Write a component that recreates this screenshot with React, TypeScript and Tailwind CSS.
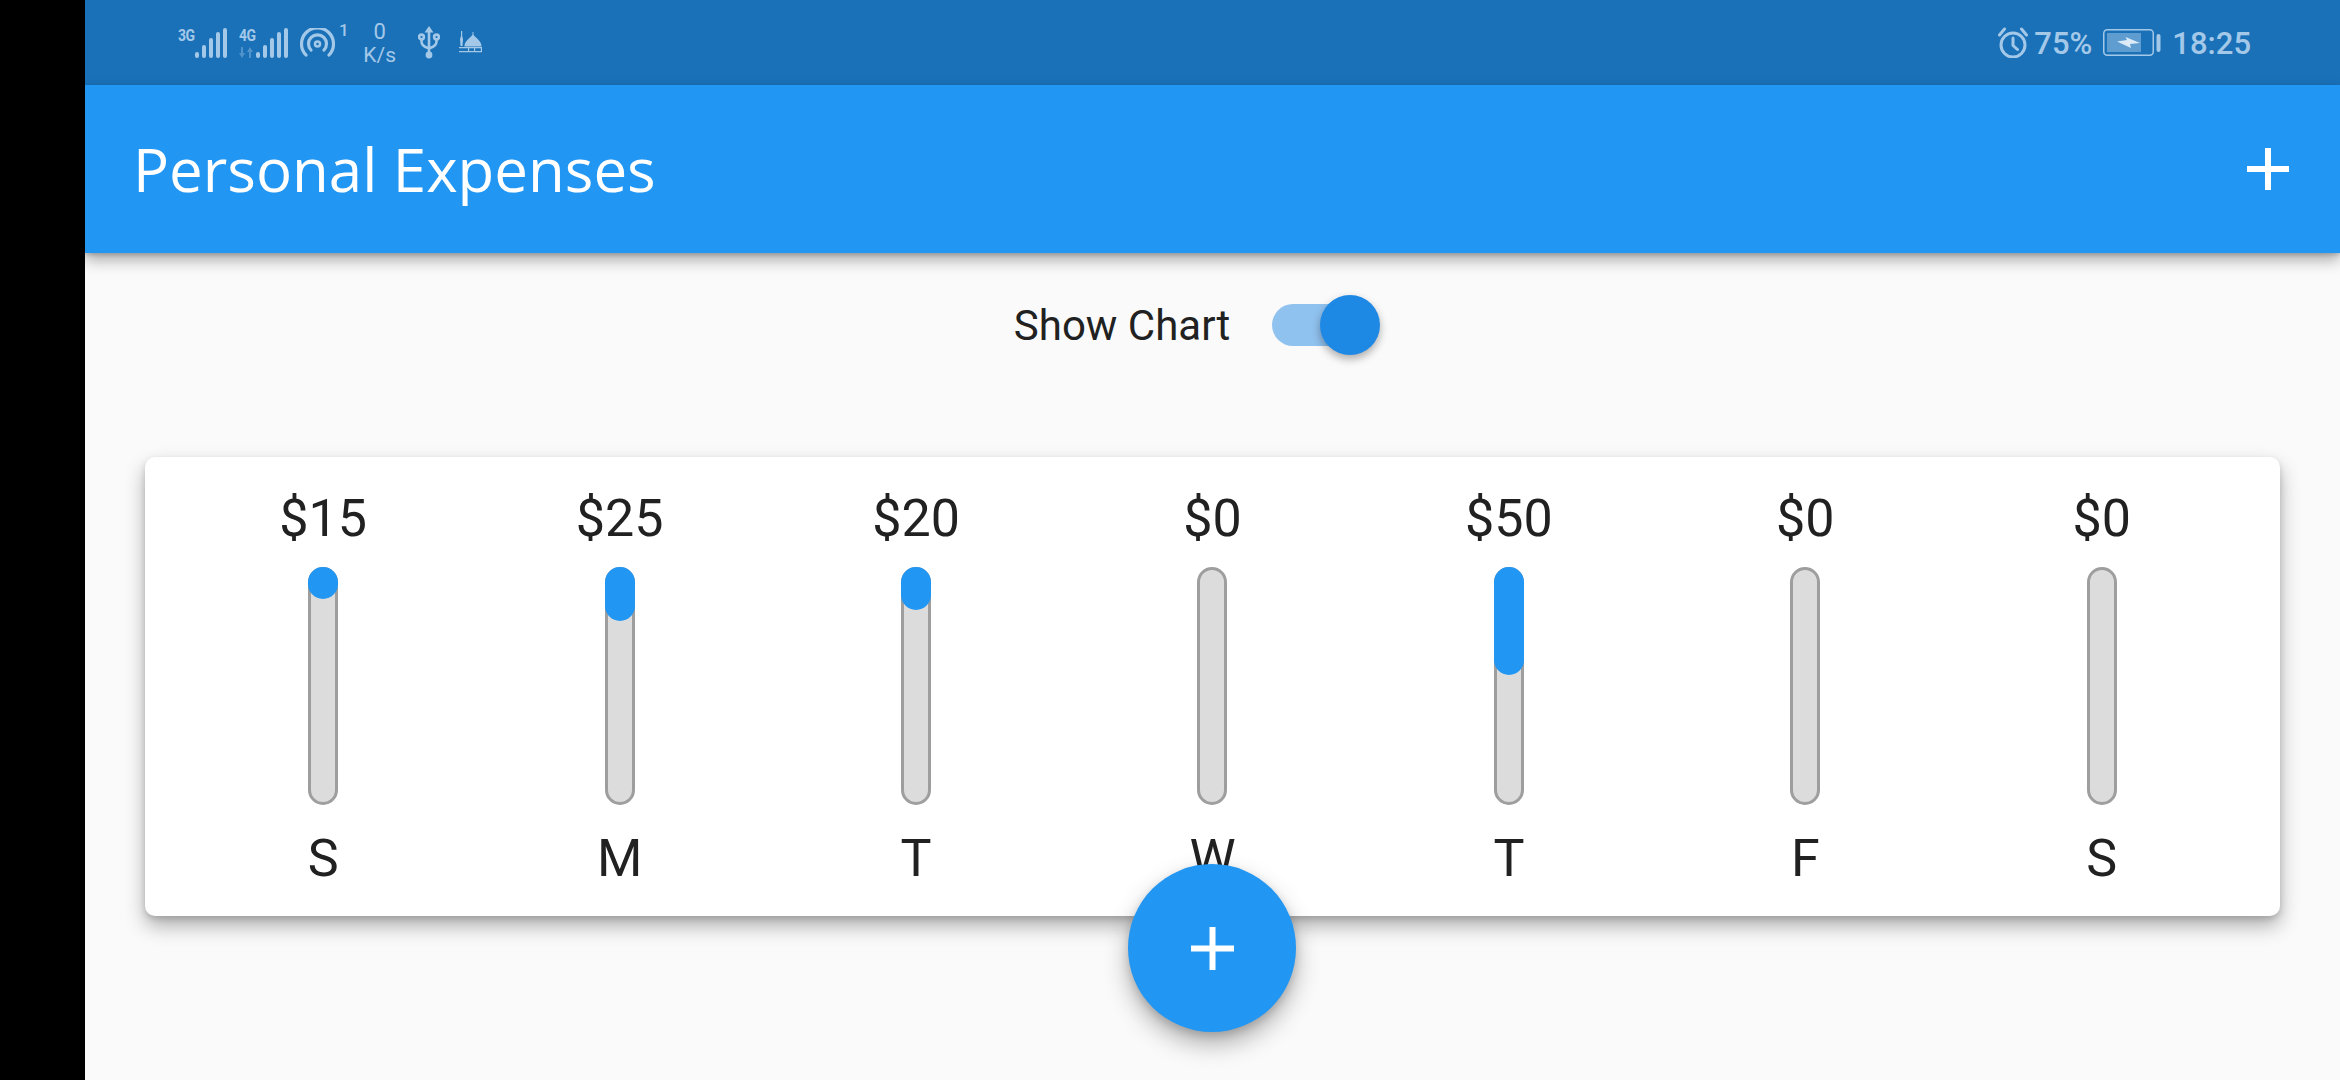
const BAR_HEIGHT = 238
const days = [
  { amount: '$15', label: 'S', pct: 15 / 110 },
  { amount: '$25', label: 'M', pct: 25 / 110 },
  { amount: '$20', label: 'T', pct: 20 / 110 },
  { amount: '$0', label: 'W', pct: 0 },
  { amount: '$50', label: 'T', pct: 50 / 110 },
  { amount: '$0', label: 'F', pct: 0 },
  { amount: '$0', label: 'S', pct: 0 },
]

const ICON = '#a4c8e8'

function ChartBar({ amount, label, pct }: { amount: string; label: string; pct: number }) {
  return (
    <div className="flex flex-1 flex-col items-center">
      <div className="h-[60px] text-[52px] leading-[60px] text-[#212121]">{amount}</div>
      <div className="relative mt-[18px] h-[238px] w-[30px] rounded-[15px] border-[3px] border-[#9e9e9e] bg-[#dcdcdc]">
        {pct > 0 && (
          <div
            className="absolute left-[-3px] top-[-3px] w-[30px] rounded-[15px] bg-[#2196f3]"
            style={{ height: BAR_HEIGHT * pct }}
          />
        )}
      </div>
      <div className="mt-[24px] h-[60px] text-[52px] leading-[60px] text-[#212121]">{label}</div>
    </div>
  )
}

function Signal({ label, arrows }: { label: string; arrows?: boolean }) {
  return (
    <div className="flex">
      <div className="flex h-[30px] w-[17px] flex-col">
        <span className="h-[16px] origin-left scale-x-[0.82] text-[17px] font-bold leading-[15px] tracking-[-0.5px] text-[#a4c8e8]">
          {label}
        </span>
        {arrows && (
          <svg width="15" height="11" viewBox="0 0 15 11" className="mt-[3px] opacity-40">
            <path d="M4 0v6H6L3 11 0 6h2V0zM10 11V5H8l3-5 3 5h-2v6z" fill={ICON} />
          </svg>
        )}
      </div>
      <svg width="32" height="30" viewBox="0 0 32 30">
        <g fill={ICON}>
          <rect x="0" y="24" width="4" height="6" rx="2" />
          <rect x="7" y="17" width="4" height="13" rx="2" />
          <rect x="14" y="10" width="4" height="20" rx="2" />
          <rect x="21" y="4" width="4" height="26" rx="2" />
          <rect x="28" y="0" width="4" height="30" rx="2" />
        </g>
      </svg>
    </div>
  )
}

function StatusBar() {
  return (
    <div className="flex h-[85px] items-center justify-between bg-[#1a71b8] pl-[93px] pr-[89px] text-[#a4c8e8]">
      <div className="flex items-center">
        <Signal label="3G" />
        <div className="ml-[12px]">
          <Signal label="4G" arrows />
        </div>
        {/* hotspot */}
        <svg width="35" height="30" viewBox="0 0 35 30" className="ml-[12px]" fill="none" stroke={ICON} strokeWidth="3.2" strokeLinecap="round">
          <path d="M6 27A16 16 0 1 1 29 27" />
          <path d="M11 22A9 9 0 1 1 24 22" />
          <circle cx="17.5" cy="16" r="2.5" strokeWidth="2.5" />
        </svg>
        <span className="mb-[26px] ml-[4px] text-[17px] font-medium leading-[16px]">1</span>
        <div className="ml-[13px] flex w-[36px] flex-col items-center">
          <span className="text-[22px] leading-[24px]">0</span>
          <span className="text-[21px] leading-[22px]">K/s</span>
        </div>
        {/* usb */}
        <svg width="22" height="33" viewBox="0 0 22 33" className="ml-[20px]" fill="none" stroke={ICON} strokeWidth="2.6">
          <path d="M11 4V28M3.5 13V15.5Q3.5 20 10 22M18.5 13V15.5Q18.5 20 12 22" />
          <path d="M11 0L6.5 6.5H15.5Z" fill={ICON} stroke="none" />
          <circle cx="3.5" cy="11" r="2.4" />
          <circle cx="18.5" cy="11" r="2.4" />
          <circle cx="11" cy="29" r="3.4" fill={ICON} stroke="none" />
        </svg>
        {/* mosque */}
        <svg width="24" height="23" viewBox="0 0 24 23" className="ml-[18px]" fill={ICON}>
          <path d="M6.5 15.5C6.5 10 11 8 15 3.5 19 8 23.5 10 23.5 15.5Z" />
          <path d="M14.5 1h1v4h-1zM3 0h1.2v5L5 8 4.5 15h-2L2 8l1-3z" />
          <path d="M1 16h23v1.2H1zM1 20h23v1.2H1zM10 17h1.2v3H10zM16 17h1.2v3H16zM22.8 17H24v3h-1.2z" />
        </svg>
      </div>
      <div className="flex items-center">
        {/* alarm */}
        <svg width="30" height="31" viewBox="0 0 30 31" fill="none" stroke={ICON} strokeWidth="3" strokeLinecap="round" strokeLinejoin="round">
          <circle cx="15" cy="18" r="12" />
          <path d="M15 11v7.5l4.5 4M1.5 8L6.5 2M28.5 8L23.5 2" />
        </svg>
        <span className="ml-[6px] mt-[2px] text-[31px] font-medium leading-[36px]">75%</span>
        <svg width="58" height="27" viewBox="0 0 58 27" className="ml-[11px]" fill="none">
          <rect x="0.75" y="0.75" width="49.5" height="25.5" rx="3.5" stroke={ICON} strokeWidth="1.5" />
          <rect x="4" y="4" width="34" height="19" fill={ICON} opacity="0.5" />
          <path d="M14 12.5L24 11 22.5 8 37 14 27 15 28 19Z" fill="#dcebf7" />
          <rect x="53.5" y="5" width="4" height="18" rx="2" fill={ICON} />
        </svg>
        <span className="ml-[11px] mt-[2px] text-[31px] font-medium leading-[36px]">18:25</span>
      </div>
    </div>
  )
}

export default function App() {
  return (
    <div className="flex h-[1080px] w-[2340px] overflow-hidden bg-black font-['Roboto',sans-serif]">
      <div className="w-[85px] shrink-0 bg-black" />
      <div className="relative flex min-w-0 flex-1 flex-col bg-[#fafafa]">
        <StatusBar />
        <header className="z-10 flex h-[168px] items-center justify-between bg-[#2196f3] pl-[48px] pr-[51px] shadow-[0_7px_14px_rgba(0,0,0,0.32),0_2px_4px_rgba(0,0,0,0.16)]">
          <h1 className="font-['Open_Sans',sans-serif] text-[60px] text-white">Personal Expenses</h1>
          <svg width="42" height="42" viewBox="0 0 42 42">
            <path d="M21 0v42M0 21h42" stroke="#fff" strokeWidth="6" />
          </svg>
        </header>
        <div className="flex h-[144px] items-center justify-center gap-[4px]">
          <span className="text-[42px] text-[#212121]">Show Chart</span>
          <div className="flex w-[177px] justify-center">
            <div className="relative h-[42px] w-[102px] rounded-full bg-[#90c2ef]">
              <div className="absolute right-[-6px] top-[-9px] h-[60px] w-[60px] rounded-full bg-[#1e88e5] shadow-[0_4px_8px_rgba(0,0,0,0.32)]" />
            </div>
          </div>
        </div>
        <div className="mx-[60px] mt-[60px] flex h-[459px] rounded-[10px] bg-white px-[30px] pt-[32px] shadow-[0_10px_20px_rgba(0,0,0,0.3),0_3px_6px_rgba(0,0,0,0.14)]">
          {days.map((d, i) => (
            <ChartBar key={i} {...d} />
          ))}
        </div>
        <div className="absolute bottom-[48px] left-[1043px] flex h-[168px] w-[168px] items-center justify-center rounded-full bg-[#2196f3] shadow-[0_12px_24px_rgba(0,0,0,0.3),0_4px_8px_rgba(0,0,0,0.14)]">
          <svg width="43" height="43" viewBox="0 0 43 43">
            <path d="M21.5 0v43M0 21.5h43" stroke="#fff" strokeWidth="6" />
          </svg>
        </div>
      </div>
    </div>
  )
}
